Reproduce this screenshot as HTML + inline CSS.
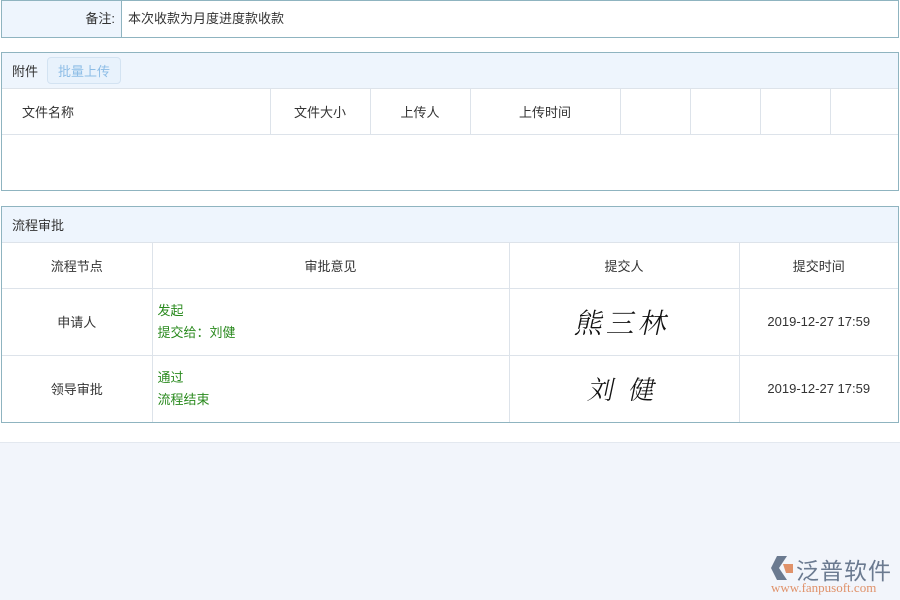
<!DOCTYPE html>
<html><head><meta charset="utf-8"><style>
*{margin:0;padding:0;box-sizing:border-box}
body{width:900px;height:600px;background:#f2f5fb;font-family:"Liberation Sans","Noto Sans CJK SC",sans-serif;font-size:13px;color:#333;position:relative;overflow:hidden}
.white{position:absolute;left:0;top:0;width:900px;height:443px;background:#fff;border-bottom:1px solid #e3e8ef}
.box{position:absolute;left:1px;width:898px;border:1px solid #8fb4c0;background:#fff}
.hd{height:36px;background:#eef5fd;border-bottom:1px solid #dde3ea;display:flex;align-items:center;padding-left:10px}
table{border-collapse:collapse;width:100%;table-layout:fixed}
td{border-right:1px solid #dde3ea;border-bottom:1px solid #dde3ea;text-align:center;vertical-align:middle}
td:last-child{border-right:none}
.g{color:#2a8a1e;text-align:left;padding-left:5px;line-height:22px}
.sig{font-family:"Noto Serif CJK SC",serif;font-size:28px;font-weight:300;color:#111;transform:skewX(-12deg);display:inline-block;letter-spacing:4px}
</style></head><body>
<div class="white"></div>
<div class="box" style="top:0;height:38px;display:flex">
<div style="width:120px;background:#eef5fd;border-right:1px solid #8fb4c0;text-align:right;padding-right:6px;line-height:35px">备注:</div>
<div style="padding-left:6px;line-height:35px">本次收款为月度进度款收款</div>
</div>
<div class="box" style="top:52px;height:139px">
<div class="hd">附件<span style="margin-left:9px;border:1px solid #d3e3f2;border-radius:4px;background:#e8f2fc;color:#8dbde6;padding:3px 10px">批量上传</span></div>
<table><colgroup><col style="width:268px"><col style="width:100px"><col style="width:100px"><col style="width:150px"><col style="width:70px"><col style="width:70px"><col style="width:70px"><col></colgroup>
<tr style="height:45px"><td style="text-align:left;padding-left:20px">文件名称</td><td>文件大小</td><td>上传人</td><td>上传时间</td><td></td><td></td><td></td><td></td></tr></table>
</div>
<div class="box" style="top:206px;height:217px">
<div class="hd">流程审批</div>
<table><colgroup><col style="width:150px"><col style="width:357px"><col style="width:230px"><col></colgroup>
<tr style="height:45px"><td>流程节点</td><td>审批意见</td><td>提交人</td><td>提交时间</td></tr>
<tr style="height:67px"><td>申请人</td><td class="g">发起<br>提交给：刘健</td><td><span class="sig">熊三林</span></td><td>2019-12-27 17:59</td></tr>
<tr style="height:67px"><td style="border-bottom:none">领导审批</td><td class="g" style="border-bottom:none">通过<br>流程结束</td><td style="border-bottom:none"><span class="sig" style="font-size:26px">刘 健</span></td><td style="border-bottom:none">2019-12-27 17:59</td></tr>
</table></div>
<div style="position:absolute;left:770px;top:555px;width:24px;height:26px">
<svg width="24" height="26" viewBox="0 0 24 26"><path d="M7 1 L17 1 L9 13 L17 25 L7 25 L1 13Z" fill="#6b7a90"/><path d="M13 9 L23 9 L23 18 L16 18Z" fill="#e0926a"/></svg></div>
<div style="position:absolute;left:796px;top:552px;font-size:23px;color:#6b7a90;letter-spacing:1px">泛普软件</div>
<div style="position:absolute;left:771px;top:580px;font-family:'Liberation Serif',serif;font-size:13px;color:#e0926a">www.fanpusoft.com</div>
</body></html>
